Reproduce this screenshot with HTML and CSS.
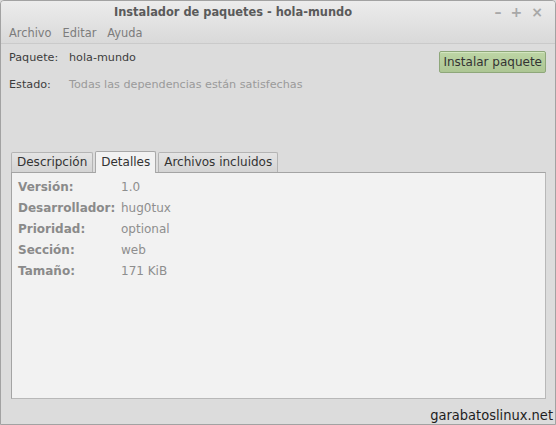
FILE: index.html
```html
<!DOCTYPE html>
<html lang="es">
<head>
  <meta charset="UTF-8">
  <title>Instalador de paquetes - hola-mundo</title>
  <link rel="stylesheet" href="styles.css">
</head>
<body>
  <div class="window">
    <!-- Barra de título -->
    <div class="titlebar">
      <span class="title">Instalador de paquetes - hola-mundo</span>
      <div class="controls">
        <span class="ctl">&#8211;</span>
        <span class="ctl">+</span>
        <span class="ctl">&#215;</span>
      </div>
    </div>
    <!-- Menú -->
    <div class="menubar">
      <span>Archivo</span>
      <span>Editar</span>
      <span>Ayuda</span>
    </div>

    <div class="content">
      <div class="summary">
        <div class="info">
          <div class="row"><span class="key">Paquete:</span><span class="val">hola-mundo</span></div>
          <div class="row"><span class="key">Estado:</span><span class="val dim">Todas las dependencias están satisfechas</span></div>
        </div>
        <button class="install">Instalar paquete</button>
      </div>

      <!-- Pestañas -->
      <div class="notebook">
        <div class="tabs">
          <span class="tab">Descripción</span>
          <span class="tab active">Detalles</span>
          <span class="tab">Archivos incluidos</span>
        </div>
        <div class="panel">
          <div class="detail"><span class="dkey">Versión:</span><span class="dval">1.0</span></div>
          <div class="detail"><span class="dkey">Desarrollador:</span><span class="dval">hug0tux</span></div>
          <div class="detail"><span class="dkey">Prioridad:</span><span class="dval">optional</span></div>
          <div class="detail"><span class="dkey">Sección:</span><span class="dval">web</span></div>
          <div class="detail"><span class="dkey">Tamaño:</span><span class="dval">171 KiB</span></div>
        </div>
      </div>
    </div>

    <div class="watermark">garabatoslinux.net</div>
  </div>
</body>
</html>
```

FILE: styles.css
```css
/* Basis */
body {
  margin: 0;
  padding: 0;
  font-family: "DejaVu Sans", sans-serif;
  font-size: 12px;
  background: #dcdcdc;
}
.window {
  position: relative;
  box-sizing: border-box;
  width: 556px;
  height: 425px;
  border: 1px solid #a2a2a2;
  border-radius: 4px 4px 0 0;
  background: #dcdcdc;
  display: flex;
  flex-direction: column;
  overflow: hidden;
}
/* Titel + Menü */
.titlebar {
  height: 22px;
  display: flex;
  align-items: center;
  justify-content: center;
  position: relative;
  background: linear-gradient(#ececec, #e2e2e2);
}
.title {
  font-weight: bold;
  font-size: 11.4px;
  color: #5a5a5a;
  margin-left: -90px;
}
.controls {
  position: absolute;
  right: 12px;
  top: 3px;
  display: flex;
  gap: 9px;
  color: #a8a8a8;
  font-size: 14px;
  font-weight: bold;
}
.menubar {
  height: 20px;
  display: flex;
  align-items: center;
  gap: 11px;
  padding-left: 8px;
  font-size: 11.4px;
  color: #7c7c7c;
  background: linear-gradient(#e2e2e2, #d9d9d9);
  border-bottom: 1px solid #cacaca;
}
/* Inhalt */
.content {
  padding: 5px 9px 0 8px;
  display: flex;
  flex-direction: column;
}
.summary {
  display: flex;
  justify-content: space-between;
  align-items: flex-start;
  height: 101px;
}
.info {
  padding-top: 2px;
  font-size: 11.2px;
}
.row {
  height: 27px;
  display: flex;
  color: #3c3c3c;
}
.row .key {
  width: 60px;
}
.row .val.dim {
  color: #9a9a9a;
}
.install {
  margin-top: 2px;
  height: 22px;
  padding: 0 3px;
  font-family: inherit;
  font-size: 12px;
  color: #333;
  background: linear-gradient(#bdd5a5, #adc694);
  border: 1px solid #8ea77a;
  border-radius: 2px;
  box-shadow: inset 0 1px 0 #d3e6c0;
}
/* Reiter */
.notebook {
  margin-left: 2px;
}
.tabs {
  display: flex;
  align-items: flex-end;
  gap: 2px;
  height: 22px;
}
.tab {
  height: 19px;
  line-height: 19px;
  padding: 0 5px;
  color: #333;
  background: linear-gradient(#e4e4e4, #d4d4d4);
  border: 1px solid #b4b4b4;
  border-bottom: none;
  border-radius: 2px 2px 0 0;
}
.tab.active {
  height: 21px;
  line-height: 20px;
  background: #f2f2f2;
  border-color: #a8a8a8;
  margin-bottom: -1px;
  position: relative;
  z-index: 1;
}
.panel {
  height: 227px;
  box-sizing: border-box;
  background: #f2f2f2;
  border: 1px solid #a4a4a4;
  border-right-color: #b8b8b8;
  border-bottom-color: #b8b8b8;
  padding: 3px 6px;
}
.detail {
  height: 21px;
  display: flex;
  align-items: center;
}
.dkey {
  width: 103px;
  font-weight: bold;
  color: #8a8a8a;
}
.dval {
  color: #8e8e8e;
}
/* Wasserzeichen */
.watermark {
  position: absolute;
  right: 2px;
  bottom: 1px;
  font-family: "DejaVu Sans Condensed", "DejaVu Sans", sans-serif;
  font-size: 14.5px;
  color: #1e1e1e;
}
```
